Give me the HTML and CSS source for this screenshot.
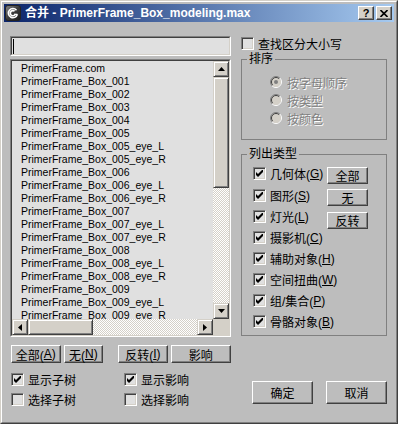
FILE: index.html
```html
<!DOCTYPE html>
<html>
<head>
<meta charset="utf-8">
<link rel="stylesheet" href="styles.css">
</head>
<body>
<div class="window">
  <div class="frame">
    <div class="titlebar">
      <svg class="app-icon" viewBox="0 0 16 16" width="16" height="16">
        <defs>
          <linearGradient id="ig" x1="0" y1="0" x2="1" y2="1">
            <stop offset="0" stop-color="#8a8a8a"/>
            <stop offset="0.5" stop-color="#3c3c3c"/>
            <stop offset="1" stop-color="#1a1a1a"/>
          </linearGradient>
        </defs>
        <rect x="0.5" y="0.5" width="15" height="15" rx="2.5" fill="url(#ig)" stroke="#222"/>
        <path d="M11.5 5.2 A4.6 4.6 0 1 0 12.4 9.4 M9.6 6.2 A2.6 2.6 0 1 0 10.4 9" fill="none" stroke="#fff" stroke-width="1.6"/>
        <path d="M12.4 9.4 L9.2 9.4" stroke="#fff" stroke-width="1.4"/>
      </svg>
      <span class="title">合并 - PrimerFrame_Box_modeling.max</span>
      <div class="tb-btns">
        <span class="tb-btn">?</span>
        <span class="tb-btn"><svg viewBox="0 0 8 7" width="8" height="7"><path d="M0.5 0 L7.5 7 M7.5 0 L0.5 7" stroke="#000" stroke-width="1.6"/></svg></span>
      </div>
    </div>

    <div class="client">
      <div class="left">
        <div class="input"><div class="input-inner"><span class="caret"></span></div></div>

        <div class="listbox">
          <div class="listbox-inner">
            <div class="items">
              <div>PrimerFrame.com</div>
              <div>PrimerFrame_Box_001</div>
              <div>PrimerFrame_Box_002</div>
              <div>PrimerFrame_Box_003</div>
              <div>PrimerFrame_Box_004</div>
              <div>PrimerFrame_Box_005</div>
              <div>PrimerFrame_Box_005_eye_L</div>
              <div>PrimerFrame_Box_005_eye_R</div>
              <div>PrimerFrame_Box_006</div>
              <div>PrimerFrame_Box_006_eye_L</div>
              <div>PrimerFrame_Box_006_eye_R</div>
              <div>PrimerFrame_Box_007</div>
              <div>PrimerFrame_Box_007_eye_L</div>
              <div>PrimerFrame_Box_007_eye_R</div>
              <div>PrimerFrame_Box_008</div>
              <div>PrimerFrame_Box_008_eye_L</div>
              <div>PrimerFrame_Box_008_eye_R</div>
              <div>PrimerFrame_Box_009</div>
              <div>PrimerFrame_Box_009_eye_L</div>
              <div>PrimerFrame_Box_009_eye_R</div>
            </div>
            <div class="vscroll">
              <span class="sbtn"><svg viewBox="0 0 7 4" width="7" height="4"><polygon points="3.5,0 7,4 0,4" fill="#000"/></svg></span>
              <span class="vthumb"></span>
              <span class="track"></span>
              <span class="sbtn"><svg viewBox="0 0 7 4" width="7" height="4"><polygon points="0,0 7,0 3.5,4" fill="#000"/></svg></span>
            </div>
            <div class="hscroll">
              <span class="sbtn"><svg viewBox="0 0 4 7" width="4" height="7"><polygon points="0,3.5 4,0 4,7" fill="#000"/></svg></span>
              <span class="hthumb"></span>
              <span class="track"></span>
              <span class="sbtn"><svg viewBox="0 0 4 7" width="4" height="7"><polygon points="0,0 4,3.5 0,7" fill="#000"/></svg></span>
            </div>
            <div class="corner"></div>
          </div>
        </div>

        <div class="btnrow">
          <span class="btn b-all">全部(<u>A</u>)</span>
          <span class="btn b-none">无(<u>N</u>)</span>
          <span class="btn b-inv">反转(<u>I</u>)</span>
          <span class="btn b-inf">影响</span>
        </div>

        <div class="opts">
          <label class="chk"><span class="cb"><svg viewBox="0 0 7 7" width="7" height="7"><polygon points="0,2 2,4 7,-1 7,2 2,7 0,5" fill="#000"/></svg></span>显示子树</label>
          <label class="chk"><span class="cb"><svg viewBox="0 0 7 7" width="7" height="7"><polygon points="0,2 2,4 7,-1 7,2 2,7 0,5" fill="#000"/></svg></span>显示影响</label>
          <label class="chk"><span class="cb"></span>选择子树</label>
          <label class="chk"><span class="cb"></span>选择影响</label>
        </div>
      </div>

      <div class="right">
        <label class="chk case"><span class="cb"></span>查找区分大小写</label>

        <div class="group sort">
          <div class="legend">排序</div>
          <div class="radios">
            <div class="radio"><svg viewBox="0 0 12 12" width="12" height="12"><circle cx="6" cy="6" r="5" fill="#d4d0c8"/><path d="M2.1 9.9 A5.5 5.5 0 0 1 9.9 2.1" fill="none" stroke="#808080"/><path d="M9.9 2.1 A5.5 5.5 0 0 1 2.1 9.9" fill="none" stroke="#fff"/><path d="M2.8 9.2 A4.5 4.5 0 0 1 9.2 2.8" fill="none" stroke="#404040"/><path d="M9.2 2.8 A4.5 4.5 0 0 1 2.8 9.2" fill="none" stroke="#d4d0c8"/><circle cx="6" cy="6" r="2" fill="#808080"/></svg><span>按字母顺序</span></div>
            <div class="radio"><svg viewBox="0 0 12 12" width="12" height="12"><circle cx="6" cy="6" r="5" fill="#d4d0c8"/><path d="M2.1 9.9 A5.5 5.5 0 0 1 9.9 2.1" fill="none" stroke="#808080"/><path d="M9.9 2.1 A5.5 5.5 0 0 1 2.1 9.9" fill="none" stroke="#fff"/><path d="M2.8 9.2 A4.5 4.5 0 0 1 9.2 2.8" fill="none" stroke="#404040"/><path d="M9.2 2.8 A4.5 4.5 0 0 1 2.8 9.2" fill="none" stroke="#d4d0c8"/></svg><span>按类型</span></div>
            <div class="radio"><svg viewBox="0 0 12 12" width="12" height="12"><circle cx="6" cy="6" r="5" fill="#d4d0c8"/><path d="M2.1 9.9 A5.5 5.5 0 0 1 9.9 2.1" fill="none" stroke="#808080"/><path d="M9.9 2.1 A5.5 5.5 0 0 1 2.1 9.9" fill="none" stroke="#fff"/><path d="M2.8 9.2 A4.5 4.5 0 0 1 9.2 2.8" fill="none" stroke="#404040"/><path d="M9.2 2.8 A4.5 4.5 0 0 1 2.8 9.2" fill="none" stroke="#d4d0c8"/></svg><span>按颜色</span></div>
          </div>
        </div>

        <div class="group types">
          <div class="legend">列出类型</div>
          <div class="types-body">
            <div class="types-checks">
              <label class="chk trow first"><span class="cb"><svg viewBox="0 0 7 7" width="7" height="7"><polygon points="0,2 2,4 7,-1 7,2 2,7 0,5" fill="#000"/></svg></span>几何体(<u>G</u>)</label>
              <label class="chk trow"><span class="cb"><svg viewBox="0 0 7 7" width="7" height="7"><polygon points="0,2 2,4 7,-1 7,2 2,7 0,5" fill="#000"/></svg></span>图形(<u>S</u>)</label>
              <label class="chk trow"><span class="cb"><svg viewBox="0 0 7 7" width="7" height="7"><polygon points="0,2 2,4 7,-1 7,2 2,7 0,5" fill="#000"/></svg></span>灯光(<u>L</u>)</label>
              <label class="chk trow"><span class="cb"><svg viewBox="0 0 7 7" width="7" height="7"><polygon points="0,2 2,4 7,-1 7,2 2,7 0,5" fill="#000"/></svg></span>摄影机(<u>C</u>)</label>
              <label class="chk trow"><span class="cb"><svg viewBox="0 0 7 7" width="7" height="7"><polygon points="0,2 2,4 7,-1 7,2 2,7 0,5" fill="#000"/></svg></span>辅助对象(<u>H</u>)</label>
              <label class="chk trow"><span class="cb"><svg viewBox="0 0 7 7" width="7" height="7"><polygon points="0,2 2,4 7,-1 7,2 2,7 0,5" fill="#000"/></svg></span>空间扭曲(<u>W</u>)</label>
              <label class="chk trow"><span class="cb"><svg viewBox="0 0 7 7" width="7" height="7"><polygon points="0,2 2,4 7,-1 7,2 2,7 0,5" fill="#000"/></svg></span>组/集合(<u>P</u>)</label>
              <label class="chk trow"><span class="cb"><svg viewBox="0 0 7 7" width="7" height="7"><polygon points="0,2 2,4 7,-1 7,2 2,7 0,5" fill="#000"/></svg></span>骨骼对象(<u>B</u>)</label>
            </div>
            <div class="types-btns">
              <span class="btn tbtn">全部</span>
              <span class="btn tbtn">无</span>
              <span class="btn tbtn">反转</span>
            </div>
          </div>
        </div>

        <div class="okrow">
          <span class="btn okbtn">确定</span>
          <span class="btn okbtn">取消</span>
        </div>
      </div>
    </div>
  </div>
</div>
</body>
</html>
```
FILE: styles.css
```css
* { box-sizing: border-box; }
html, body { margin: 0; padding: 0; }
body {
  width: 398px;
  height: 424px;
  overflow: hidden;
  font-family: "Liberation Sans", "Noto Sans CJK SC", sans-serif;
  font-size: 12px;
  color: #000;
  background: #bdbdbd;
}
.window {
  width: 398px;
  height: 424px;
  border: 1px solid;
  border-color: #d4d0c8 #404040 #404040 #d4d0c8;
  background: #bdbdbd;
}
.frame {
  height: 100%;
  border: 1px solid;
  border-color: #fff #808080 #808080 #fff;
  padding: 2px;
  display: flex;
  flex-direction: column;
}
.titlebar {
  height: 18px;
  flex: none;
  display: flex;
  align-items: center;
  padding: 0 2px 0 1px;
  background: linear-gradient(to right, #0a246a, #a6caf0);
  color: #fff;
}
.app-icon { flex: none; margin-right: 4px; }
.title {
  flex: 1;
  font-weight: bold;
  font-size: 12px;
  white-space: nowrap;
  line-height: 18px;
}
.tb-btns { display: flex; gap: 2px; }
.tb-btn {
  width: 16px;
  height: 14px;
  background: #d4d0c8;
  border: 1px solid;
  border-color: #fff #404040 #404040 #fff;
  box-shadow: inset -1px -1px #808080;
  display: flex;
  align-items: center;
  justify-content: center;
  color: #000;
  font-weight: bold;
  font-size: 11px;
  line-height: 12px;
}

.client {
  flex: 1;
  display: flex;
  gap: 10px;
  padding: 14px 7px 0 6px;
}
.left { width: 221px; display: flex; flex-direction: column; }
.right { width: 146px; display: flex; flex-direction: column; }

/* sunken input */
.input {
  height: 20px;
  border: 1px solid;
  border-color: #808080 #fff #fff #808080;
}
.input-inner {
  height: 100%;
  border: 1px solid;
  border-color: #404040 #d4d0c8 #d4d0c8 #404040;
  background: #e0e0e0;
  padding: 1px 0 0 1px;
}
.caret { display: block; width: 1px; height: 15px; background: #000; }

.listbox {
  margin-top: 3px;
  height: 278px;
  border: 1px solid;
  border-color: #808080 #fff #fff #808080;
}
.listbox-inner {
  height: 100%;
  border: 1px solid;
  border-color: #404040 #d4d0c8 #d4d0c8 #404040;
  background: #e0e0e0;
  display: grid;
  grid-template-columns: 201px 16px;
  grid-template-rows: 258px 16px;
}
.items {
  overflow: hidden;
  padding: 1px 0 0 9px;
  font-size: 10.5px;
  line-height: 13px;
  white-space: nowrap;
}
.vscroll { display: flex; flex-direction: column; }
.hscroll { display: flex; }
.sbtn, .vthumb, .hthumb {
  flex: none;
  background: #d4d0c8;
  border: 1px solid;
  border-color: #d4d0c8 #404040 #404040 #d4d0c8;
  box-shadow: inset 1px 1px #fff, inset -1px -1px #808080;
  display: flex;
  align-items: center;
  justify-content: center;
}
.sbtn { width: 16px; height: 16px; }
.vthumb { height: 111px; }
.hthumb { width: 65px; }
.track {
  flex: 1;
  background-image: conic-gradient(#fff 25%, #d4d0c8 0 50%, #fff 0 75%, #d4d0c8 0);
  background-size: 2px 2px;
}
.corner { background: #d4d0c8; }

/* buttons */
.btn {
  display: flex;
  align-items: center;
  justify-content: center;
  background: #bdbdbd;
  border: 1px solid;
  border-color: #fff #404040 #404040 #fff;
  box-shadow: inset -1px -1px #808080;
  white-space: nowrap;
  font-size: 12px;
}
.btnrow {
  margin-top: 8px;
  margin-left: 1px;
  display: flex;
  height: 18px;
}
.btnrow .btn { height: 18px; }
.b-all { width: 50px; }
.b-none { width: 40px; margin-left: 3px; }
.b-inv { width: 50px; margin-left: 15px; }
.b-inf { width: 61px; margin-left: 3px; }

/* checkboxes */
.chk {
  display: flex;
  align-items: center;
  white-space: nowrap;
  height: 13px;
}
.cb {
  flex: none;
  width: 13px;
  height: 13px;
  margin-right: 4px;
  background: #e0e0e0;
  border: 1px solid;
  border-color: #808080 #fff #fff #808080;
  box-shadow: inset 1px 1px #404040, inset -1px -1px #d4d0c8;
  display: flex;
  align-items: center;
  justify-content: center;
}
.opts {
  margin-top: 10px;
  margin-left: 1px;
  display: grid;
  grid-template-columns: 113px 1fr;
  row-gap: 7px;
}

.case { margin-top: 1px; }

/* group boxes */
.group {
  border: 1px solid #808080;
}
.legend {
  margin: -8px 0 0 5px;
  padding: 0 2px;
  width: fit-content;
  background: #bdbdbd;
  line-height: 14px;
  height: 14px;
}
.sort { margin-top: 9px; height: 81px; }
.radios { padding: 7px 0 0 28px; }
.radio {
  display: flex;
  align-items: center;
  height: 18px;
  color: #808080;
  text-shadow: 1px 1px #fff;
}
.radio svg { flex: none; margin-right: 5px; }

.types { margin-top: 14px; height: 182px; }
.types-body { display: flex; padding: 1px 0 0 11px; }
.types-checks { width: 74px; display: flex; flex-direction: column; }
.trow { height: 21px; }
.trow.first { height: 23px; }
.types-btns {
  display: flex;
  flex-direction: column;
  padding-top: 5px;
}
.tbtn { width: 41px; height: 17px; }
.tbtn + .tbtn { margin-top: 5px; }
.tbtn:last-child { margin-top: 6px; }

.okrow {
  margin-top: 45px;
  display: flex;
  justify-content: flex-end;
  gap: 13px;
}
.okbtn { width: 61px; height: 23px; }
```
